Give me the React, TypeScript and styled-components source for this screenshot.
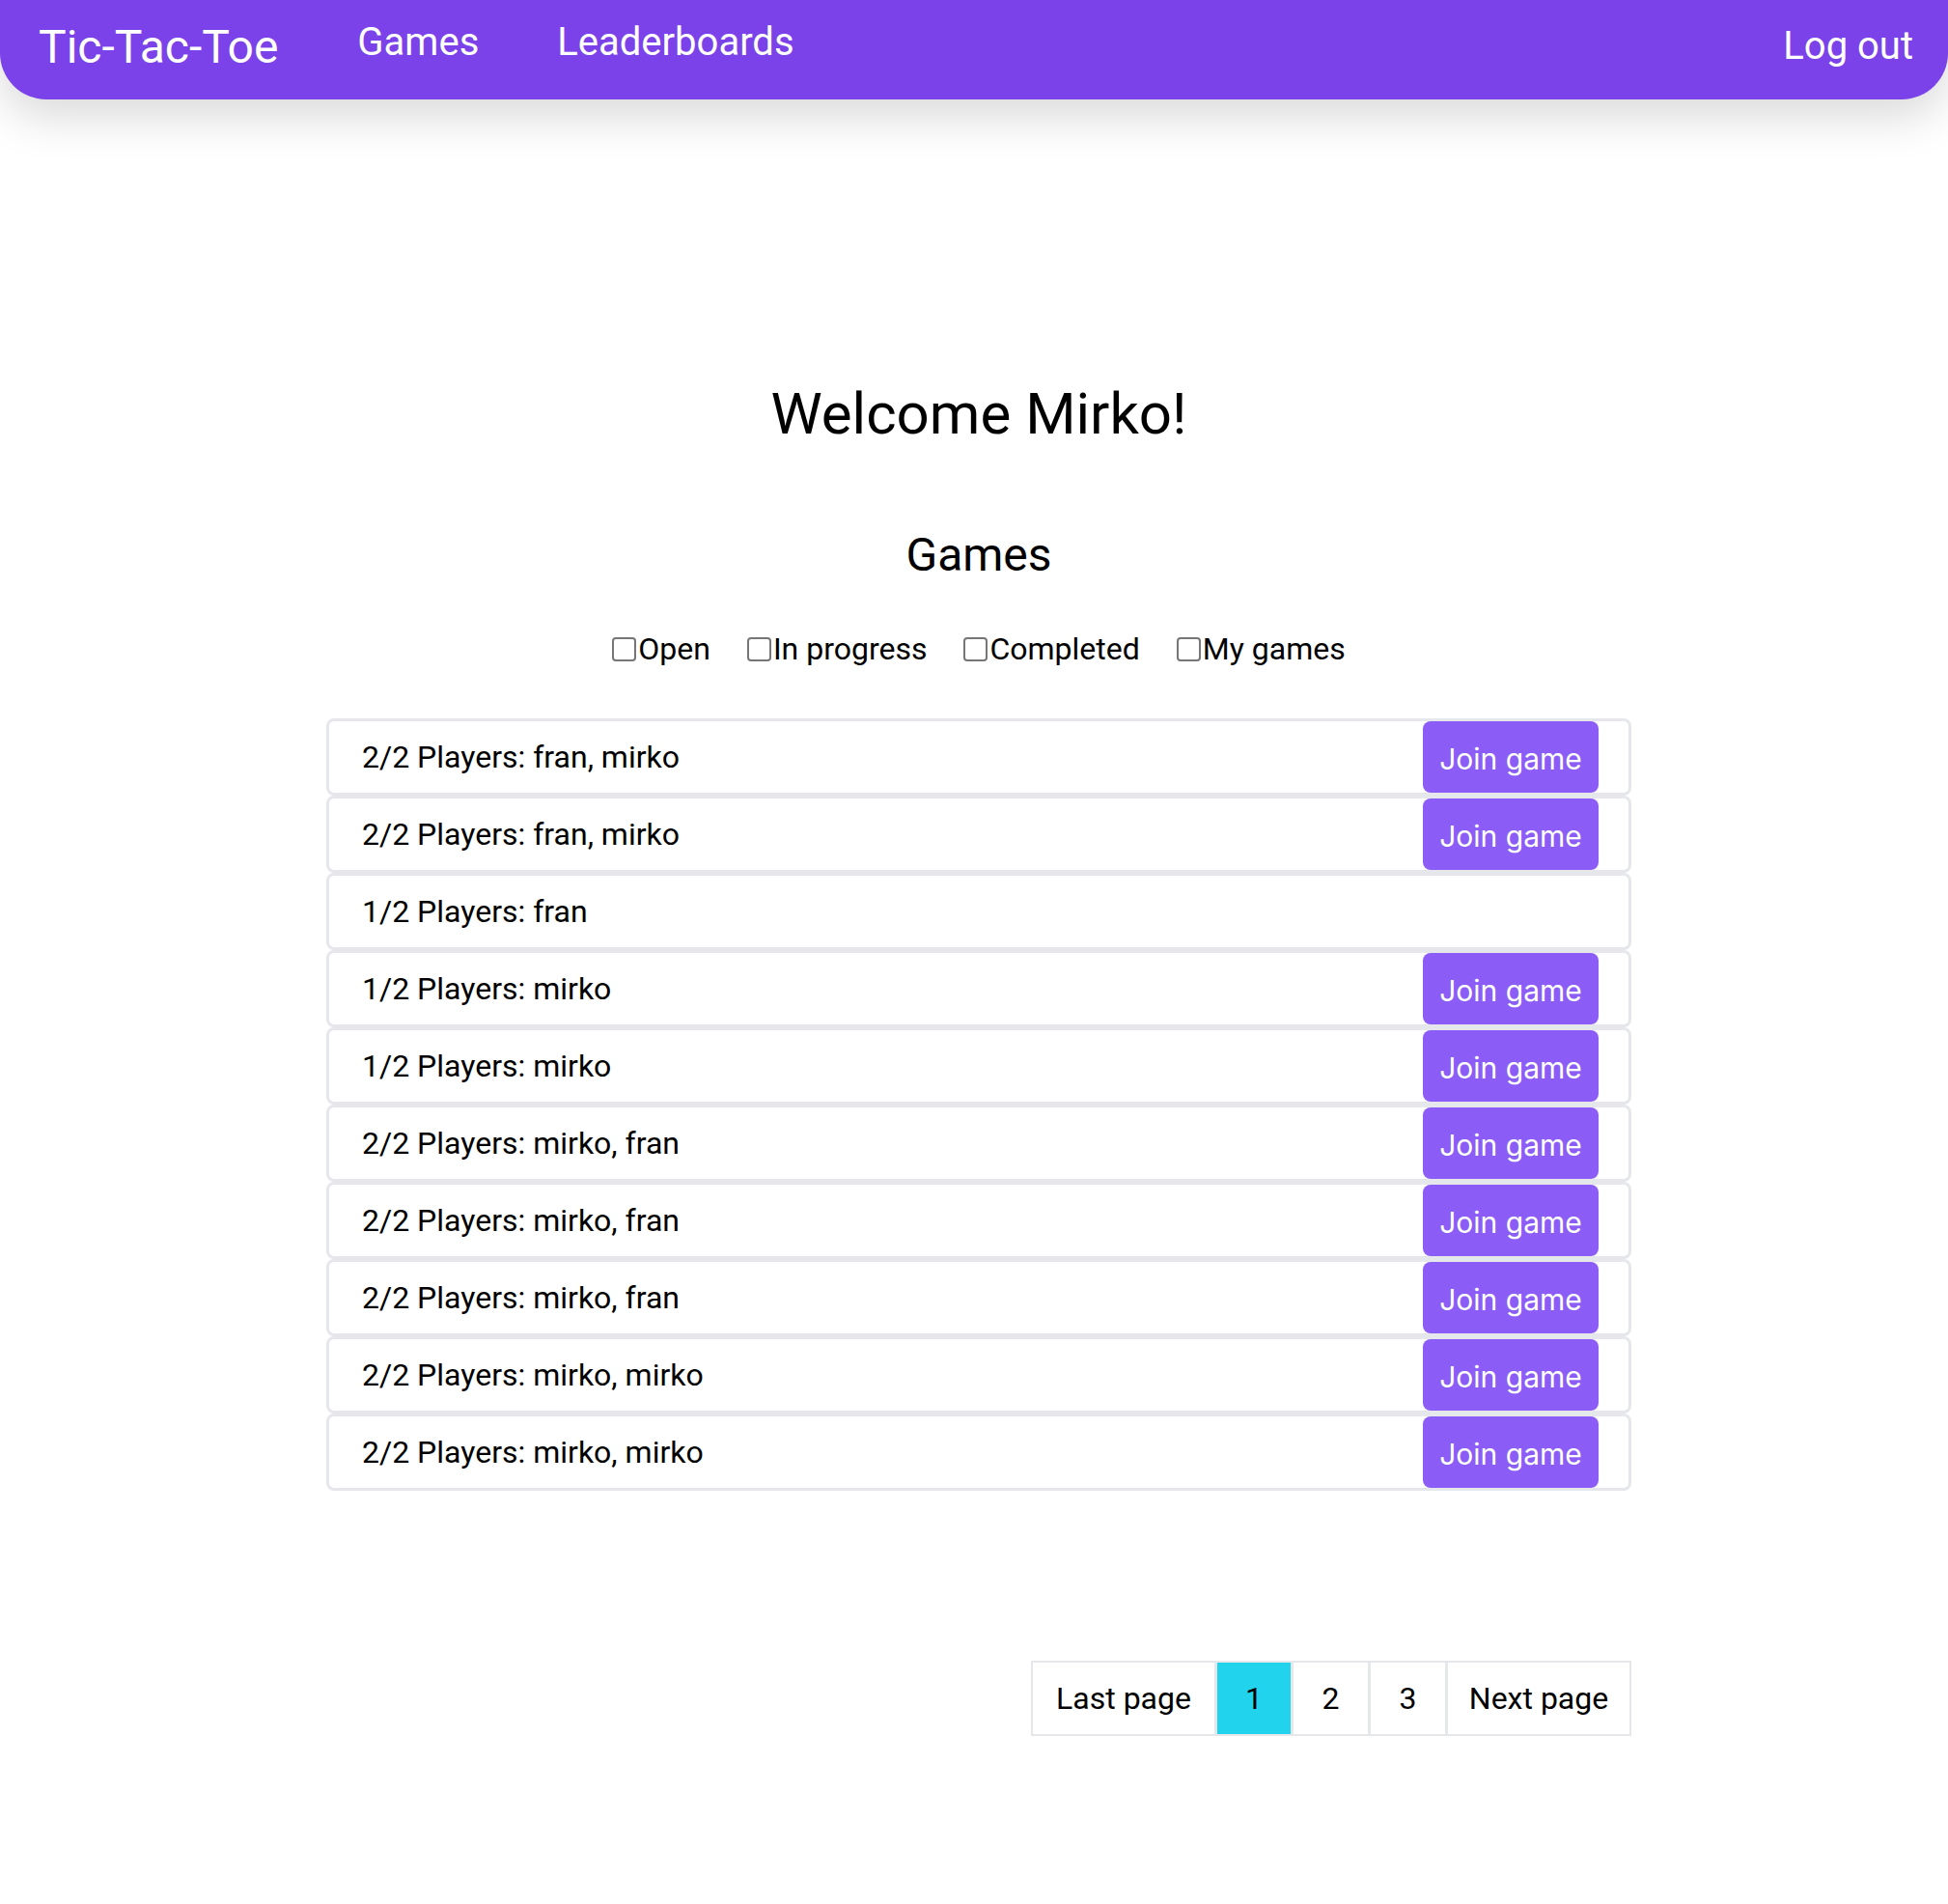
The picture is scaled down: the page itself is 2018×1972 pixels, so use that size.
import React from "react";
import styled, { createGlobalStyle } from "styled-components";

const GlobalStyle = createGlobalStyle`
  html, body {
    margin: 0;
    padding: 0;
    background: #ffffff;
  }
  body {
    font-family: Roboto, "Liberation Sans", Arial, sans-serif;
    color: #000000;
  }
  * { box-sizing: border-box; }
`;

const Page = styled.div`
  min-height: 1972px;
  background: #ffffff;
`;

const NavBar = styled.nav`
  display: flex;
  align-items: flex-start;
  height: 103px;
  padding: 0 36px 0 40px;
  background: #7a42e8;
  border-radius: 0 0 48px 48px;
  box-shadow: 0 18px 48px rgba(0, 0, 0, 0.15);
  color: #ffffff;
`;

const Logo = styled.a`
  font-size: 48px;
  line-height: 1;
  margin-top: 25px;
  margin-right: 82px;
  color: #ffffff;
  text-decoration: none;
`;

const NavLinks = styled.div`
  display: flex;
  gap: 81px;
  flex: 1;
`;

const NavLink = styled.a<{ $top?: number }>`
  font-size: 40px;
  line-height: 1;
  margin-top: ${(p) => p.$top ?? 25}px;
  color: #ffffff;
  text-decoration: none;
`;

const Main = styled.main`
  display: flex;
  flex-direction: column;
  align-items: center;
  padding-left: 10px;
`;

const Welcome = styled.h1`
  font-size: 60px;
  font-weight: 400;
  line-height: 1;
  margin: 296px 0 0;
`;

const SectionTitle = styled.h2`
  font-size: 48px;
  font-weight: 400;
  line-height: 1;
  margin: 92px 0 0;
`;

const Filters = styled.div`
  display: flex;
  gap: 38px;
  margin-top: 57px;
`;

const FilterLabel = styled.label`
  display: flex;
  align-items: center;
  font-size: 32px;
  line-height: 1;
`;

const Checkbox = styled.input.attrs({ type: "checkbox" })`
  appearance: none;
  width: 25px;
  height: 25px;
  margin: 0 2px 0 0;
  border: 2px solid #767676;
  border-radius: 4px;
  background: #ffffff;
`;

const GameList = styled.ul`
  list-style: none;
  margin: 56px 0 0;
  padding: 0;
  width: 1352px;
  display: flex;
  flex-direction: column;
`;

const GameRow = styled.li`
  display: flex;
  align-items: stretch;
  justify-content: space-between;
  height: 80px;
  border: 3px solid #e5e7eb;
  border-radius: 8px;
  padding-left: 34px;
  padding-right: 31px;
`;

const GameText = styled.span`
  align-self: center;
  font-size: 32px;
  line-height: 1;
`;

const JoinButton = styled.button`
  width: 182px;
  border: none;
  border-radius: 8px;
  background: #8b5cf6;
  color: #ffffff;
  font-family: Inter, "Liberation Sans", Arial, sans-serif;
  font-size: 30px;
  line-height: 1;
  padding: 4px 0 0;
  cursor: pointer;
`;

const PaginationWrap = styled.div`
  width: 1352px;
  display: flex;
  justify-content: flex-end;
  margin-top: 176px;
`;

const Pagination = styled.div`
  display: flex;
  height: 78px;
`;

const PageCell = styled.button<{ $active?: boolean; $w: number }>`
  width: ${(p) => p.$w}px;
  height: 78px;
  margin-left: -1px;
  border: 2px solid #e5e7eb;
  background: ${(p) => (p.$active ? "#22d3ee" : "#ffffff")};
  color: #000000;
  font-family: Roboto, "Liberation Sans", Arial, sans-serif;
  font-size: 32px;
  line-height: 1;
  padding: 0;
  cursor: pointer;
  &:first-child { margin-left: 0; }
`;

const games = [
  { text: "2/2 Players: fran, mirko", join: true },
  { text: "2/2 Players: fran, mirko", join: true },
  { text: "1/2 Players: fran", join: false },
  { text: "1/2 Players: mirko", join: true },
  { text: "1/2 Players: mirko", join: true },
  { text: "2/2 Players: mirko, fran", join: true },
  { text: "2/2 Players: mirko, fran", join: true },
  { text: "2/2 Players: mirko, fran", join: true },
  { text: "2/2 Players: mirko, mirko", join: true },
  { text: "2/2 Players: mirko, mirko", join: true },
];

const filters = ["Open", "In progress", "Completed", "My games"];

export default function App() {
  return (
    <Page>
      <GlobalStyle />
      <NavBar>
        <Logo href="#">Tic-Tac-Toe</Logo>
        <NavLinks>
          <NavLink href="#" $top={24}>Games</NavLink>
          <NavLink href="#" $top={24}>Leaderboards</NavLink>
        </NavLinks>
        <NavLink href="#" $top={28}>Log out</NavLink>
      </NavBar>
      <Main>
        <Welcome>Welcome Mirko!</Welcome>
        <SectionTitle>Games</SectionTitle>
        <Filters>
          {filters.map((f) => (
            <FilterLabel key={f}>
              <Checkbox />
              {f}
            </FilterLabel>
          ))}
        </Filters>
        <GameList>
          {games.map((g, i) => (
            <GameRow key={i}>
              <GameText>{g.text}</GameText>
              {g.join && <JoinButton>Join game</JoinButton>}
            </GameRow>
          ))}
        </GameList>
        <PaginationWrap>
          <Pagination>
            <PageCell $w={192}>Last page</PageCell>
            <PageCell $w={80} $active>1</PageCell>
            <PageCell $w={81}>2</PageCell>
            <PageCell $w={81}>3</PageCell>
            <PageCell $w={192}>Next page</PageCell>
          </Pagination>
        </PaginationWrap>
      </Main>
    </Page>
  );
}
